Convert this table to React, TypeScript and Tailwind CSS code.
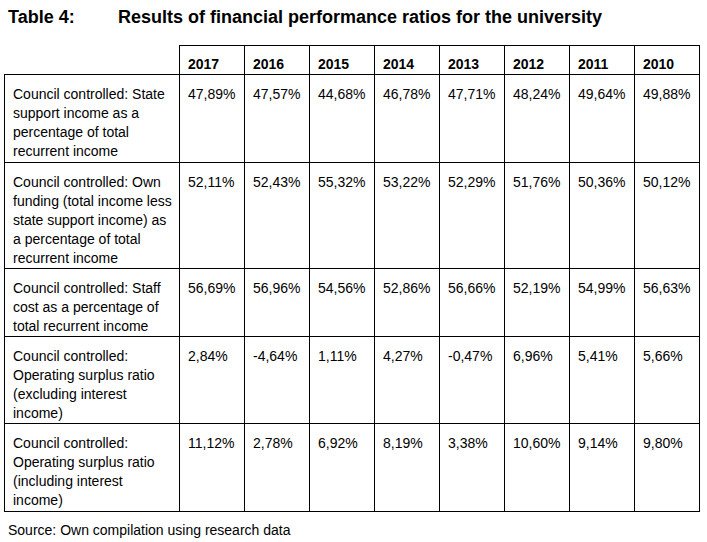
const years = ["2017", "2016", "2015", "2014", "2013", "2012", "2011", "2010"];

const rows = [
  {
    label: "Council controlled: State support income as a percentage of total recurrent income",
    h: "h-[88px]",
    values: ["47,89%", "47,57%", "44,68%", "46,78%", "47,71%", "48,24%", "49,64%", "49,88%"],
  },
  {
    label: "Council controlled: Own funding (total income less state support income) as a percentage of total recurrent income",
    h: "h-[106px]",
    values: ["52,11%", "52,43%", "55,32%", "53,22%", "52,29%", "51,76%", "50,36%", "50,12%"],
  },
  {
    label: "Council controlled: Staff cost as a percentage of total recurrent income",
    h: "h-[67px]",
    values: ["56,69%", "56,96%", "54,56%", "52,86%", "56,66%", "52,19%", "54,99%", "56,63%"],
  },
  {
    label: "Council controlled: Operating surplus ratio (excluding interest income)",
    h: "h-[87px]",
    values: ["2,84%", "-4,64%", "1,11%", "4,27%", "-0,47%", "6,96%", "5,41%", "5,66%"],
  },
  {
    label: "Council controlled: Operating surplus ratio (including interest income)",
    h: "h-[88px]",
    values: ["11,12%", "2,78%", "6,92%", "8,19%", "3,38%", "10,60%", "9,14%", "9,80%"],
  },
];

export default function App() {
  return (
    <div className="w-[707px] h-[542px] bg-white text-black font-['Liberation_Sans',Arial,sans-serif] overflow-hidden">
      <div className="flex pl-2 pt-[7px] text-[18px] font-bold leading-[20px]">
        <span className="w-[110px]">Table 4:</span>
        <span>Results of financial performance ratios for the university</span>
      </div>
      <table className="ml-[4px] mt-[18px] w-[696px] table-fixed border-collapse text-[14px] leading-[19px]">
        <colgroup>
          <col className="w-[175px]" />
          {years.map((y) => (
            <col key={y} className="w-[65px]" />
          ))}
        </colgroup>
        <thead>
          <tr className="h-[29px]">
            <th className="border-r border-b border-black" />
            {years.map((y) => (
              <th key={y} className="border border-black px-2 pb-0 align-bottom text-left font-bold">
                {y}
              </th>
            ))}
          </tr>
        </thead>
        <tbody>
          {rows.map((r) => (
            <tr key={r.label} className={r.h}>
              <td className="border border-black pl-2 pr-[3px] pt-[10px] align-top">{r.label}</td>
              {r.values.map((v, i) => (
                <td key={i} className="border border-black px-2 pt-[10px] align-top">
                  {v}
                </td>
              ))}
            </tr>
          ))}
        </tbody>
      </table>
      <p className="pl-2 pt-[9px] text-[14px] leading-[19px]">Source: Own compilation using research data</p>
    </div>
  );
}
